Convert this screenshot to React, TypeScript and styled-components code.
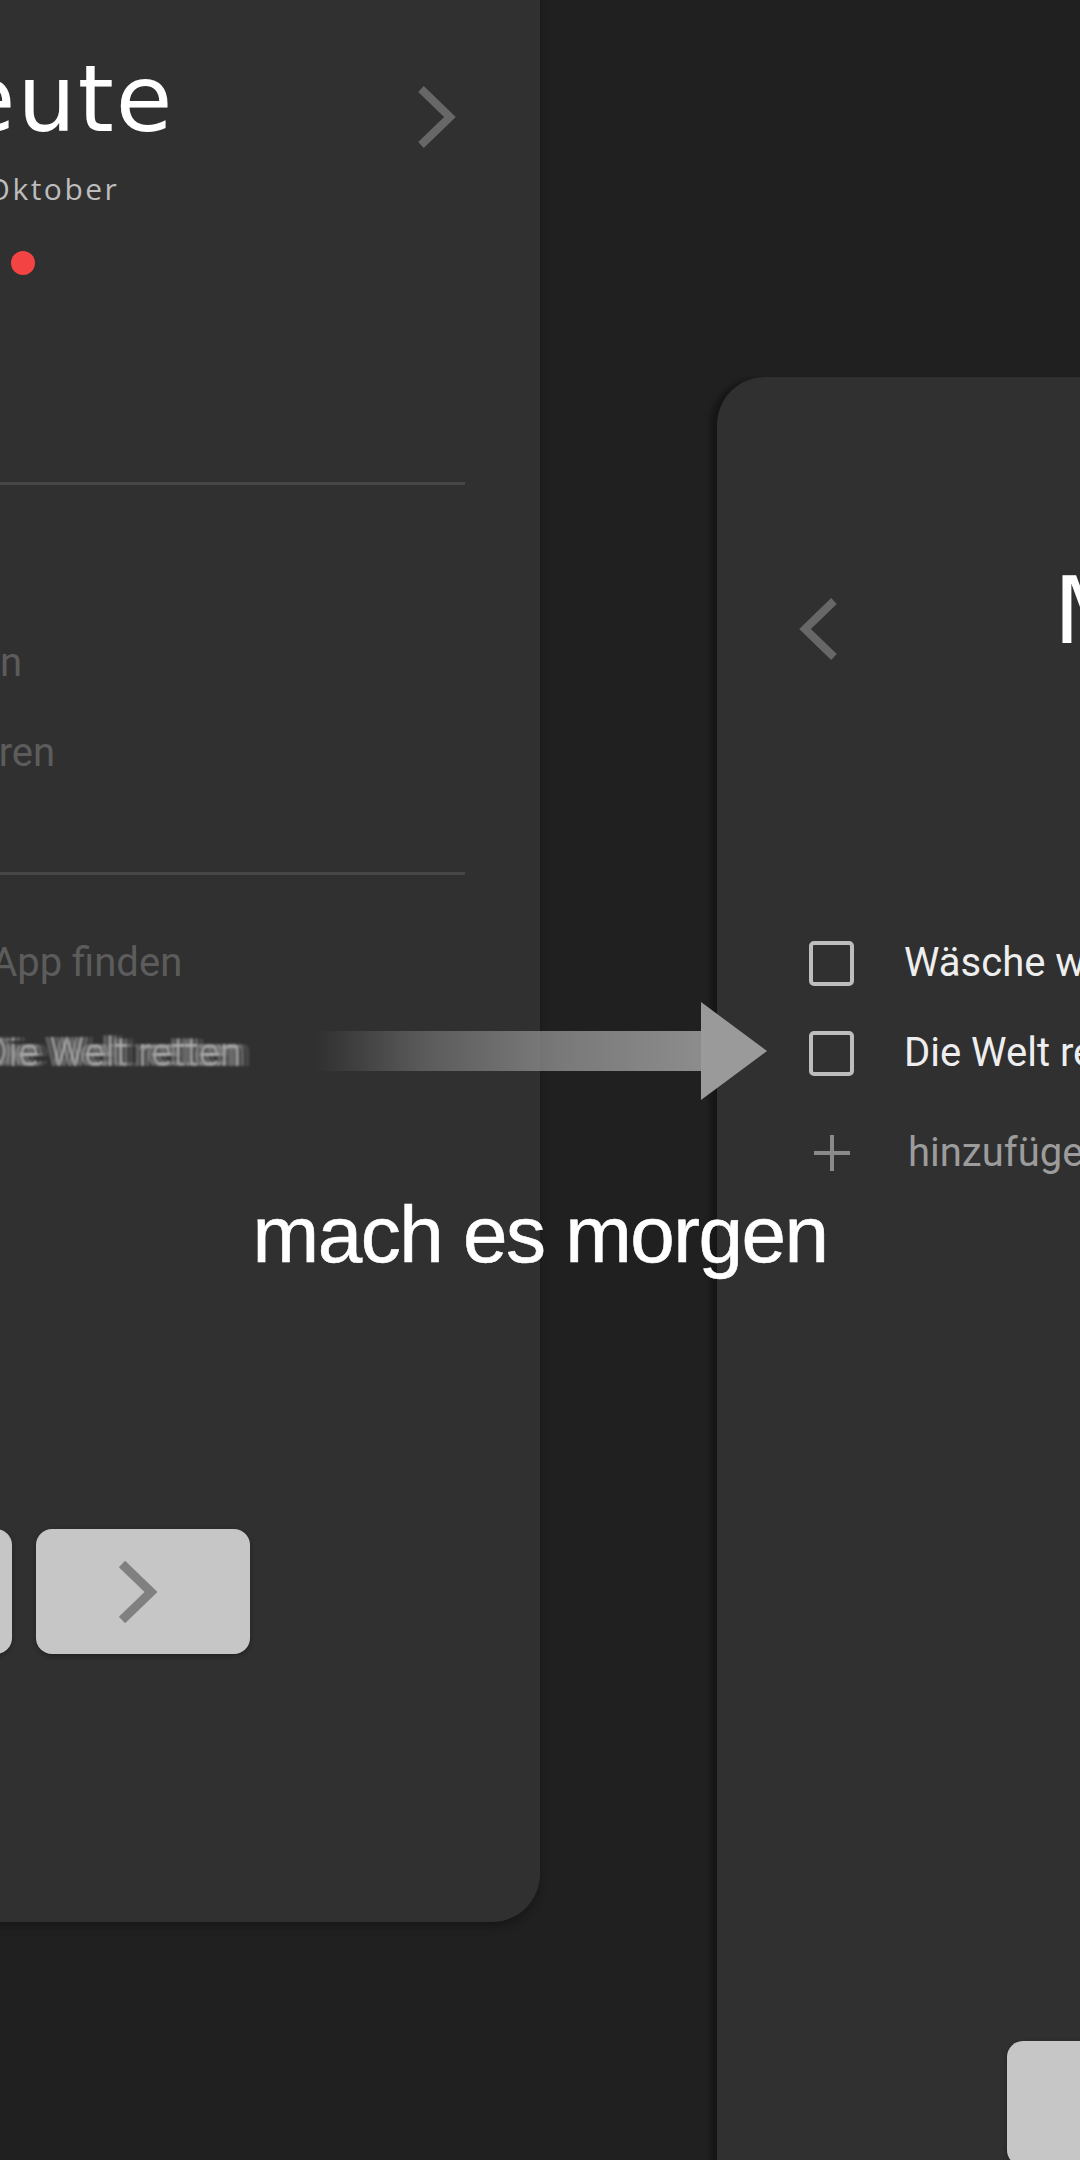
import React from "react";
import styled, { createGlobalStyle } from "styled-components";

const GlobalStyle = createGlobalStyle`
  html, body { margin: 0; padding: 0; background: #202020; }
  #root { width: 1080px; height: 2160px; }
`;

const Page = styled.main`
  position: relative;
  width: 1080px;
  height: 2160px;
  overflow: hidden;
  background: #202020;
`;

const Stage = styled.div`
  display: flex;
  align-items: flex-start;
`;

const Screen = styled.section<{ $side: "left" | "right" }>`
  flex: none;
  box-sizing: border-box;
  width: 1032px;
  height: 2057px;
  display: flex;
  flex-direction: column;
  background: #303030;
  border-radius: 48px;
  padding: 181px 0 268px;
  margin-left: ${(p) => (p.$side === "left" ? "-492px" : "177px")};
  margin-top: ${(p) => (p.$side === "left" ? "-135px" : "377px")};
  box-shadow: ${(p) =>
    p.$side === "left"
      ? "0 5px 8px rgba(0,0,0,0.28)"
      : "-9px 0 5px -2px rgba(0,0,0,0.32)"};
`;

const Header = styled.header`
  display: grid;
  grid-template-columns: 1fr auto 1fr;
  align-items: start;
  padding: 0 82px 0 80px;
`;

const NavChevron = styled.div<{ $end?: boolean }>`
  justify-self: ${(p) => (p.$end ? "end" : "start")};
  margin-top: 40px;
  width: 41px;
  height: 62px;
  color: #676767;
  display: flex;
`;

const TitleBlock = styled.div`
  display: flex;
  flex-direction: column;
  align-items: center;
`;

const Title = styled.h1<{ $offset?: number }>`
  margin: 7px 0 0;
  padding-left: ${(p) => p.$offset ?? 0}px;
  font-family: "DejaVu Sans", "Open Sans", sans-serif;
  font-weight: 400;
  font-size: 92px;
  line-height: 94px;
  letter-spacing: 2px;
  color: #ffffff;
  white-space: nowrap;
`;

const DateLine = styled.p`
  margin: 27px 0 0;
  font-family: "Open Sans", "Noto Sans", sans-serif;
  font-weight: 400;
  font-size: 30px;
  line-height: 30px;
  letter-spacing: 2.5px;
  color: #bdbdbd;
  white-space: nowrap;
`;

const Dot = styled.span`
  margin-top: 47px;
  width: 24px;
  height: 24px;
  border-radius: 50%;
  background: #f44343;
`;

const Divider = styled.hr<{ $top: number }>`
  margin: ${(p) => p.$top}px 75px 0;
  border: 0;
  height: 3px;
  background: #474747;
`;

const TaskList = styled.ul<{ $top: number }>`
  list-style: none;
  margin: ${(p) => p.$top}px 0 0;
  padding: 0 0 0 92px;
  display: flex;
  flex-direction: column;
`;

const TaskRow = styled.li<{ $tone: "done" | "open" | "add"; $shift?: number }>`
  display: flex;
  align-items: center;
  gap: 50px;
  height: 90px;
  margin-top: ${(p) => p.$shift ?? 0}px;
  font-family: Roboto, "Noto Sans", sans-serif;
  font-size: 40px;
  line-height: 90px;
  white-space: nowrap;
  color: ${(p) =>
    p.$tone === "done" ? "#5c5c5c" : p.$tone === "open" ? "#eeeeee" : "#9c9c9c"};
`;

const Checkbox = styled.span<{ $faded?: boolean }>`
  flex: none;
  box-sizing: border-box;
  width: 45px;
  height: 45px;
  border: 4px solid ${(p) => (p.$faded ? "#5c5c5c" : "#bdbdbd")};
  border-radius: 5px;
`;

const PlusBox = styled.span`
  flex: none;
  width: 45px;
  height: 45px;
  display: flex;
  align-items: center;
  justify-content: center;
  color: #8a8a8a;
  margin-right: 4px;
`;

const FlyingText = styled.span`
  display: inline-block;
  transform: translateX(287px);
  color: rgba(200, 200, 200, 0.65);
  filter: blur(0.9px);
  text-shadow: 5px 0 0 rgba(190, 190, 190, 0.35), -5px 0 0 rgba(190, 190, 190, 0.35),
    10px 0 1px rgba(190, 190, 190, 0.18);
`;

const ButtonRow = styled.div`
  margin-top: auto;
  display: flex;
  justify-content: center;
  gap: 24px;
`;

const NavButton = styled.button`
  width: 214px;
  height: 125px;
  border: 0;
  padding: 0;
  border-radius: 16px;
  background: #c6c6c6;
  color: #808080;
  box-shadow: 0 2px 5px rgba(0, 0, 0, 0.3);
  display: flex;
  align-items: center;
  justify-content: center;
`;

const ButtonIcon = styled.span<{ $dir: "left" | "right" }>`
  display: flex;
  margin-right: ${(p) => (p.$dir === "right" ? 9 : 0)}px;
  margin-left: ${(p) => (p.$dir === "left" ? 9 : 0)}px;
`;

const Overlay = styled.div`
  position: absolute;
  inset: 0;
  display: flex;
  flex-direction: column;
  align-items: center;
  pointer-events: none;
`;

const ArrowSvg = styled.svg`
  align-self: flex-start;
  margin: 1000px 0 0 316px;
  flex: none;
`;

const Caption = styled.h2`
  margin: 93px 0 0;
  font-family: "Liberation Sans", Arial, sans-serif;
  font-weight: 400;
  font-size: 80px;
  line-height: 80px;
  letter-spacing: -1.5px;
  color: #ffffff;
  white-space: nowrap;
  -webkit-text-stroke: 0.6px #ffffff;
`;

const Chevron = ({ dir, weight = 8 }: { dir: "left" | "right"; weight?: number }) => (
  <svg width="41" height="62" viewBox="0 0 41 62">
    <polyline
      points={dir === "right" ? "4,3 33,31 4,59" : "37,3 8,31 37,59"}
      fill="none"
      stroke="currentColor"
      strokeWidth={weight}
      strokeLinejoin="miter"
    />
  </svg>
);

const Plus = () => (
  <svg width="36" height="36" viewBox="0 0 36 36">
    <path d="M18 0V36M0 18H36" stroke="currentColor" strokeWidth="4" fill="none" />
  </svg>
);

const Buttons = () => (
  <ButtonRow>
    <NavButton aria-label="zurück">
      <ButtonIcon $dir="left">
        <Chevron dir="left" weight={9} />
      </ButtonIcon>
    </NavButton>
    <NavButton aria-label="weiter">
      <ButtonIcon $dir="right">
        <Chevron dir="right" weight={9} />
      </ButtonIcon>
    </NavButton>
  </ButtonRow>
);

const todayOpen = ["Briefe schreiben", "Geschenke kaufen", "Fahrräder reparieren"];

export default function App() {
  return (
    <>
      <GlobalStyle />
      <Page>
        <Stage>
          <Screen $side="left">
            <Header>
              <NavChevron>
                <Chevron dir="left" />
              </NavChevron>
              <TitleBlock>
                <Title $offset={16}>Heute</Title>
                <DateLine>12. Oktober</DateLine>
                <Dot />
              </TitleBlock>
              <NavChevron $end>
                <Chevron dir="right" />
              </NavChevron>
            </Header>
            <Divider $top={207} />
            <TaskList $top={43}>
              {todayOpen.map((t) => (
                <TaskRow key={t} $tone="done">
                  <Checkbox $faded />
                  <span>{t}</span>
                </TaskRow>
              ))}
            </TaskList>
            <Divider $top={74} />
            <TaskList $top={43}>
              <TaskRow $tone="done">
                <Checkbox $faded />
                <span>Eine neue To-Do App finden</span>
              </TaskRow>
              <TaskRow $tone="done">
                <Checkbox $faded />
                <FlyingText>Die Welt retten</FlyingText>
              </TaskRow>
            </TaskList>
            <Buttons />
          </Screen>

          <Screen $side="right">
            <Header>
              <NavChevron>
                <Chevron dir="left" />
              </NavChevron>
              <TitleBlock>
                <Title>Morgen</Title>
              </TitleBlock>
              <NavChevron $end>
                <Chevron dir="right" />
              </NavChevron>
            </Header>
            <TaskList $top={258}>
              <TaskRow $tone="open">
                <Checkbox />
                <span>Wäsche waschen</span>
              </TaskRow>
              <TaskRow $tone="open">
                <Checkbox />
                <span>Die Welt retten</span>
              </TaskRow>
              <TaskRow $tone="add" $shift={10}>
                <PlusBox>
                  <Plus />
                </PlusBox>
                <span>hinzufügen</span>
              </TaskRow>
            </TaskList>
            <Buttons />
          </Screen>
        </Stage>

        <Overlay>
          <ArrowSvg width="452" height="102" viewBox="0 0 452 102">
            <defs>
              <linearGradient id="arrowFade" x1="0" y1="0" x2="1" y2="0">
                <stop offset="0" stopColor="#8e8e8e" stopOpacity="0" />
                <stop offset="0.27" stopColor="#8e8e8e" stopOpacity="0.45" />
                <stop offset="0.6" stopColor="#8e8e8e" stopOpacity="0.8" />
                <stop offset="1" stopColor="#8e8e8e" stopOpacity="1" />
              </linearGradient>
            </defs>
            <rect x="0" y="31" width="398" height="40" fill="url(#arrowFade)" />
            <polygon points="385,2 451,51 385,100" fill="#9a9a9a" />
          </ArrowSvg>
          <Caption>mach es morgen</Caption>
        </Overlay>
      </Page>
    </>
  );
}
